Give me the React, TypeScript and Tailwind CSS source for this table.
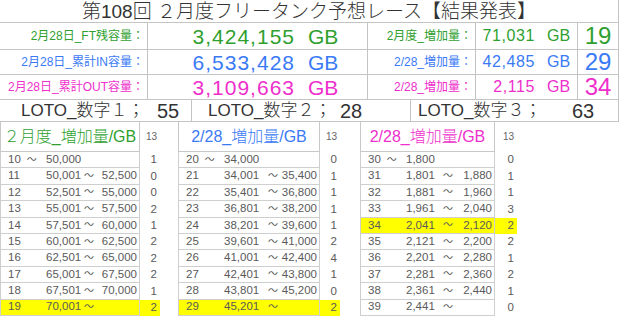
import React from "react";

type R = { n: string; a: string; b: string; c: string; first?: boolean; hl?: boolean };

const t1: R[] = [
  { n: "10", a: "50,000", b: "", c: "1", first: true },
  { n: "11", a: "50,001", b: "52,500", c: "0" },
  { n: "12", a: "52,501", b: "55,000", c: "0" },
  { n: "13", a: "55,001", b: "57,500", c: "2" },
  { n: "14", a: "57,501", b: "60,000", c: "1" },
  { n: "15", a: "60,001", b: "62,500", c: "2" },
  { n: "16", a: "62,501", b: "65,000", c: "2" },
  { n: "17", a: "65,001", b: "67,500", c: "2" },
  { n: "18", a: "67,501", b: "70,000", c: "1" },
  { n: "19", a: "70,001", b: "", c: "2", hl: true },
];
const t2: R[] = [
  { n: "20", a: "34,000", b: "", c: "0", first: true },
  { n: "21", a: "34,001", b: "35,400", c: "1" },
  { n: "22", a: "35,401", b: "36,800", c: "1" },
  { n: "23", a: "36,801", b: "38,200", c: "1" },
  { n: "24", a: "38,201", b: "39,600", c: "1" },
  { n: "25", a: "39,601", b: "41,000", c: "2" },
  { n: "26", a: "41,001", b: "42,400", c: "4" },
  { n: "27", a: "42,401", b: "43,800", c: "1" },
  { n: "28", a: "43,801", b: "45,200", c: "0" },
  { n: "29", a: "45,201", b: "", c: "2", hl: true },
];
const t3: R[] = [
  { n: "30", a: "1,800", b: "", c: "0", first: true },
  { n: "31", a: "1,801", b: "1,880", c: "1" },
  { n: "32", a: "1,881", b: "1,960", c: "1" },
  { n: "33", a: "1,961", b: "2,040", c: "3" },
  { n: "34", a: "2,041", b: "2,120", c: "2", hl: true },
  { n: "35", a: "2,121", b: "2,200", c: "2" },
  { n: "36", a: "2,201", b: "2,280", c: "1" },
  { n: "37", a: "2,281", b: "2,360", c: "2" },
  { n: "38", a: "2,361", b: "2,440", c: "1" },
  { n: "39", a: "2,441", b: "", c: "0" },
];

function Table({
  title,
  color,
  w,
  mid,
  rows,
  cw,
}: {
  title: string;
  color: string;
  w: string;
  mid: string;
  rows: R[];
  cw: string;
}) {
  return (
    <div className="flex flex-col">
      <div className="flex h-[30px]">
        <div className={`${w} border-x border-b border-[#c8c8c8] flex items-center justify-center whitespace-nowrap text-[16px] font-light ${color}`}>
          {title}
        </div>
        <div className={`${cw} flex items-center justify-end pr-[3px] text-[10px] text-[#666]`}>13</div>
      </div>
      {rows.map((r) => (
        <div key={r.n} className={`flex h-[16.4px] text-[11.5px] text-[#5a5a5a] whitespace-nowrap ${r.hl ? "bg-[#ffff00]" : ""}`}>
          <div className={`${w} flex items-center border-x border-b border-[#cfcfcf]`}>
            {r.first ? (
              <>
                <span className="w-[45px] pl-[7px]">
                  {r.n}
                  <span className="ml-[6px] text-[10px]">～</span>
                </span>
                <span>{r.a}</span>
              </>
            ) : (
              <>
                <span className="w-[45px] pl-[7px]">{r.n}</span>
                <span className={mid}>{r.a}</span>
                <span className="w-[12px] text-[10px]">～</span>
                <span className="flex-1 text-right pr-[2px]">{r.b}</span>
              </>
            )}
          </div>
          <div className={`${cw} flex items-center justify-end pr-[3px]`}>{r.c}</div>
        </div>
      ))}
    </div>
  );
}

const top = [
  {
    color: "text-[#2f9f2f]",
    l1: "2月28日_FT残容量：",
    v1: "3,424,155",
    l2: "2月度_増加量：",
    v2: "71,031",
    n: "19",
    h: "h-[27px]",
  },
  {
    color: "text-[#3a7af5]",
    l1: "2月28日_累計IN容量：",
    v1: "6,533,428",
    l2: "2/28_増加量：",
    v2: "42,485",
    n: "29",
    h: "h-[25px]",
  },
  {
    color: "text-[#ee2fcc]",
    l1: "2月28日_累計OUT容量：",
    v1: "3,109,663",
    l2: "2/28_増加量：",
    v2: "2,115",
    n: "34",
    h: "h-[25px]",
  },
];

export default function App() {
  return (
    <div className="w-[620px] h-[316px] overflow-hidden bg-white font-['Liberation_Sans','Noto_Sans_CJK_JP',sans-serif] leading-none">
      <div className="w-[619px] border-r border-[#c4c4c4]">
        <div className="h-[23px] border-b border-[#c4c4c4] flex items-center justify-center whitespace-nowrap text-[19px] font-light text-[#333]">
          第108回 ２月度フリータンク予想レース【結果発表】
        </div>
        {top.map((r) => (
          <div
            key={r.n}
            className={`grid grid-cols-[148px_220px_108px_102px_40px] ${r.h} border-b border-[#c4c4c4] whitespace-nowrap ${r.color}`}
          >
            <div className="flex items-center justify-end pr-[3px] text-[12px] border-r border-[#c4c4c4]">{r.l1}</div>
            <div className="flex items-center border-r border-[#c4c4c4]">
              <span className="w-[147px] text-right text-[21px] tracking-[1px]">{r.v1}</span>
              <span className="ml-[13px] text-[21px]">GB</span>
            </div>
            <div className="flex items-center justify-end pr-[3px] text-[12px] border-r border-[#c4c4c4]">{r.l2}</div>
            <div className="flex items-center border-r border-[#c4c4c4]">
              <span className="w-[59px] text-right text-[16px] tracking-[0.6px]">{r.v2}</span>
              <span className="ml-[12px] text-[16px]">GB</span>
            </div>
            <div className="flex items-center justify-center text-[24px]">{r.n}</div>
          </div>
        ))}
        <div className="grid grid-cols-[192px_219px_208px] h-[22px] border-b border-[#c4c4c4] text-[#333] whitespace-nowrap">
          <div className="flex items-center border-r border-[#c4c4c4] pl-[21px]">
            <span className="w-[136px] shrink-0 text-[17px] font-light">LOTO_数字１；</span>
            <span className="text-[20px]">55</span>
          </div>
          <div className="flex items-center border-r border-[#c4c4c4] pl-[16px]">
            <span className="w-[132px] shrink-0 text-[17px] font-light">LOTO_数字２；</span>
            <span className="text-[20px]">28</span>
          </div>
          <div className="flex items-center pl-[7px]">
            <span className="w-[154px] shrink-0 text-[17px] font-light">LOTO_数字３；</span>
            <span className="text-[20px]">63</span>
          </div>
        </div>
      </div>
      <div className="flex">
        <Table title="２月度_増加量/GB" color="text-[#2f9f2f]" w="w-[140px]" mid="w-[38px]" rows={t1} cw="w-[20px]" />
        <div className="ml-[18px]">
          <Table title="2/28_増加量/GB" color="text-[#3a7af5]" w="w-[142px]" mid="w-[44px]" rows={t2} cw="w-[20px]" />
        </div>
        <div className="ml-[20px]">
          <Table title="2/28_増加量/GB" color="text-[#ee2fcc]" w="w-[135px]" mid="w-[37px]" rows={t3} cw="w-[22px]" />
        </div>
      </div>
    </div>
  );
}
